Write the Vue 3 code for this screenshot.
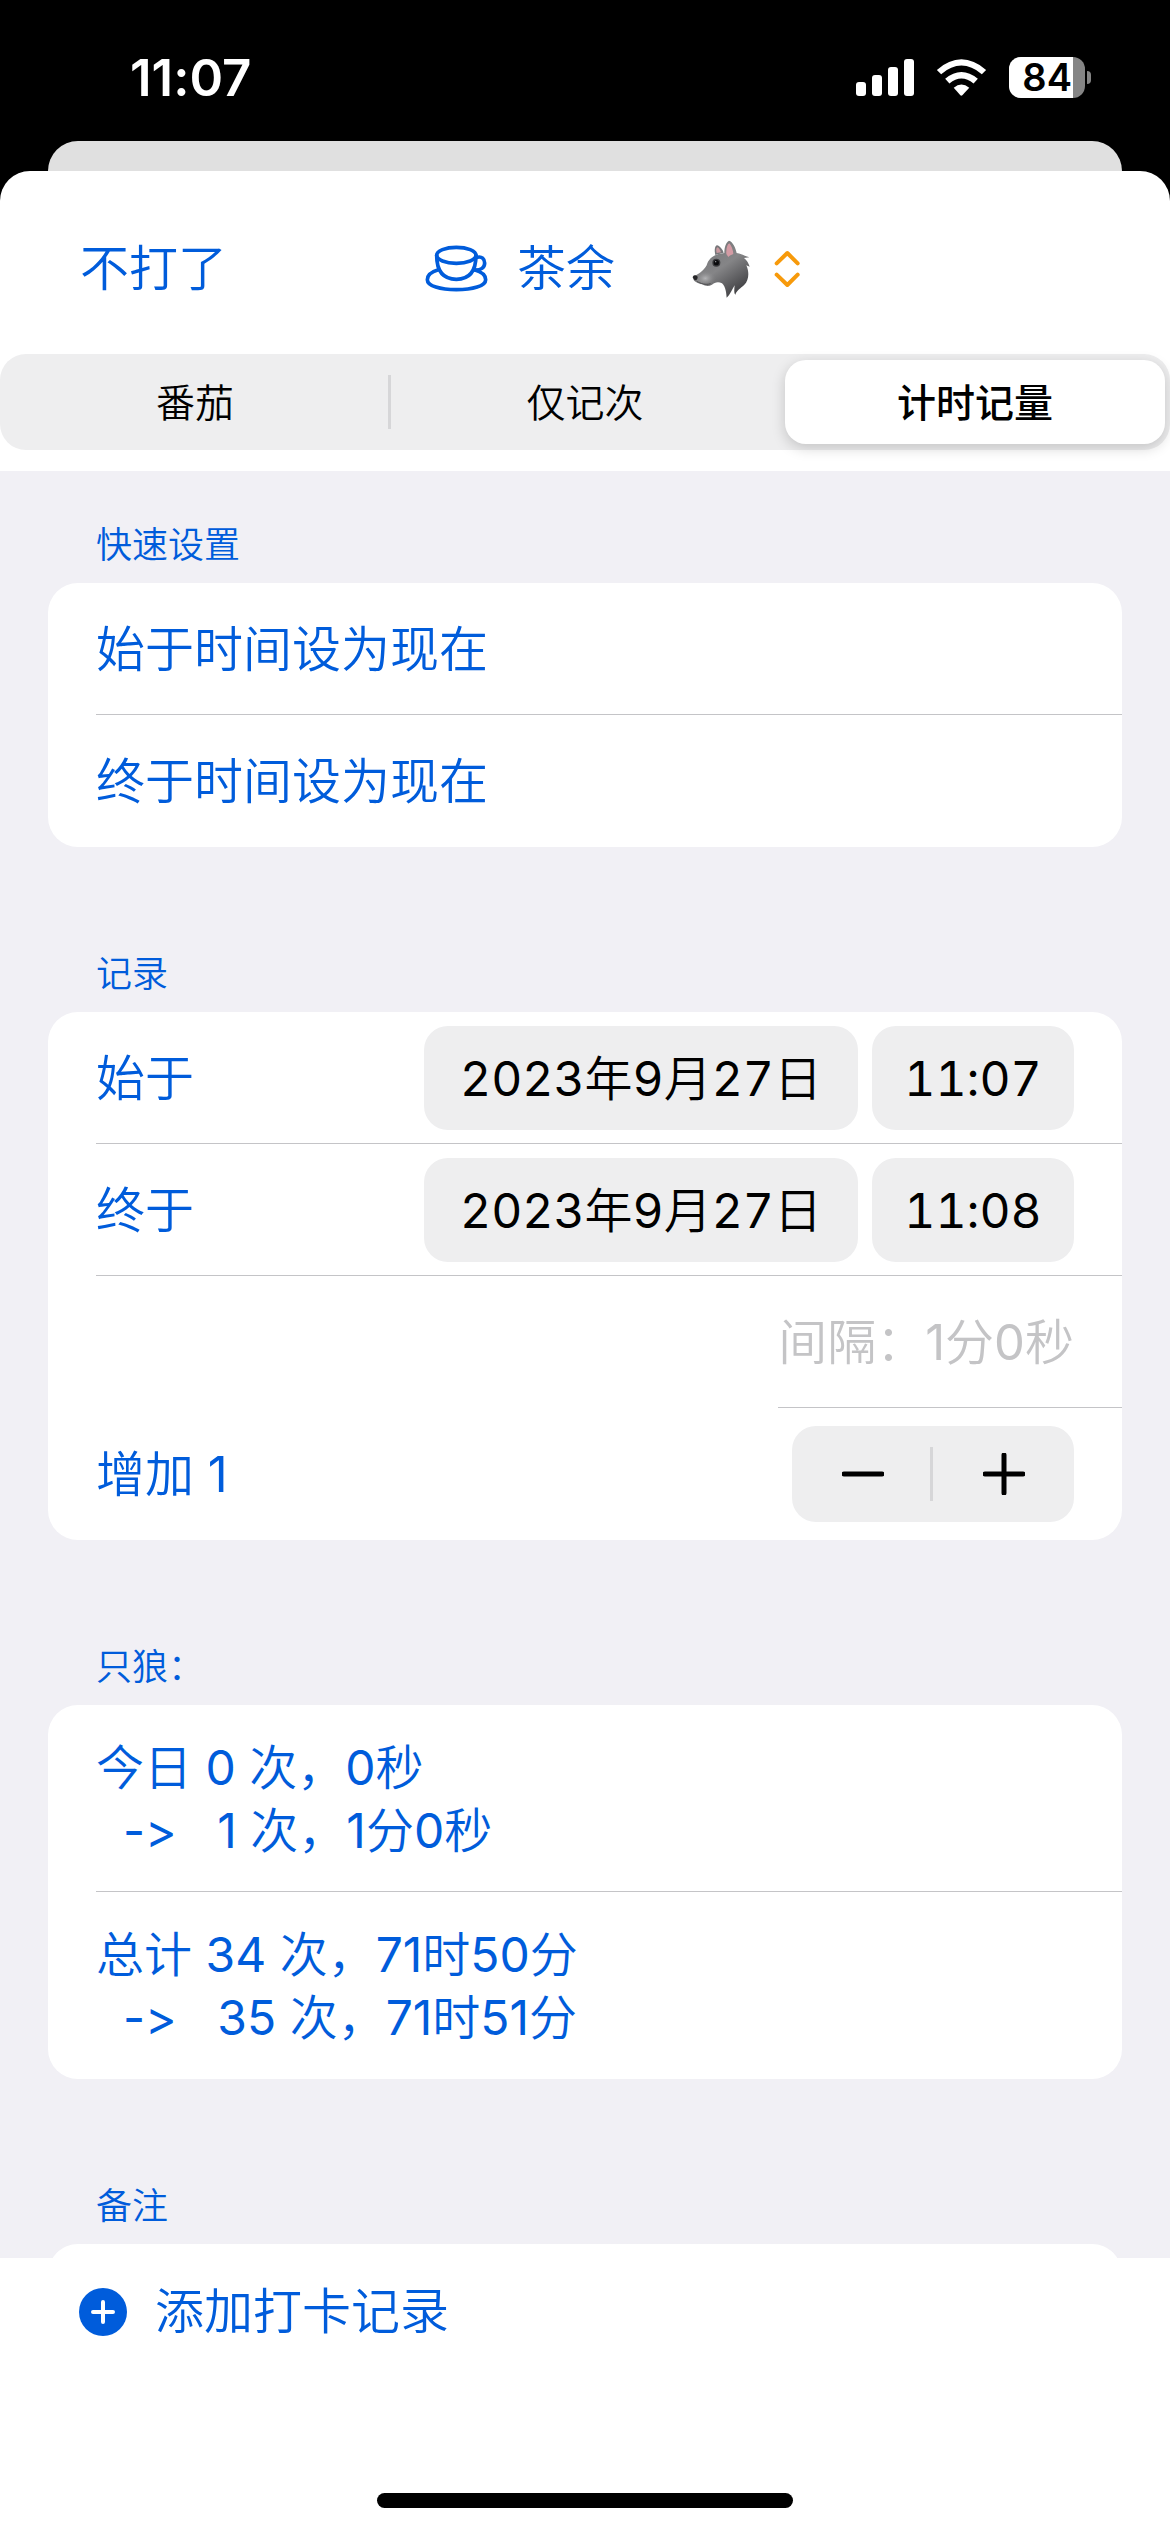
<script setup>
import { ref, computed } from 'vue'

const modes = ['番茄', '仅记次', '计时记量']
const mode = ref('计时记量')
const times = [
  { label: '始于', date: '2023年9月27日', time: '11:07' },
  { label: '终于', date: '2023年9月27日', time: '11:08' },
]
const amount = ref(1)
const note = ref('')
const stats = computed(() => [
  `今日 0 次，0秒\n  ->   ${amount.value} 次，1分0秒`,
  `总计 34 次，71时50分\n  ->   ${34 + amount.value} 次，71时51分`,
])
</script>

<template>
  <div class="screen">
    <div class="status">
      <span class="clock">11:07</span>
      <div class="indicators">
        <svg class="signal" viewBox="0 0 58 37" aria-hidden="true">
          <rect x="0" y="23" width="10" height="14" rx="3" />
          <rect x="16" y="16" width="10" height="21" rx="3" />
          <rect x="32" y="8" width="10" height="29" rx="3" />
          <rect x="48" y="0" width="10" height="37" rx="3" />
        </svg>
        <svg class="wifi" viewBox="318 56 153 112" aria-hidden="true">
          <path d="M320 89 Q394 25 469 89 L456 102 Q394 50 333 102 Z" />
          <path d="M345 116 Q394 75 444 116 L431 130 Q394 100 358 130 Z" />
          <path d="M371 143 Q394 124 418 143 L397 166 Q394 169 391 166 Z" />
        </svg>
        <div class="battery"><span class="level">84</span></div>
        <span class="nub"></span>
      </div>
    </div>
    <div class="back-sheet"></div>

    <main class="sheet">
      <header class="bar">
        <button class="plain" type="button">不打了</button>
        <button class="plain tag" type="button">
          <svg class="cup" viewBox="72 72 195 147" aria-hidden="true">
            <ellipse cx="169" cy="106" rx="59" ry="24" />
            <path d="M110 106 C110 153 128 178 169 178 C210 178 228 153 228 106" />
            <path d="M232 112 C245 108 254 117 254 129 C254 143 243 151 224 150" />
            <path d="M113 150 C93 156 82 167 82 179 C82 198 121 209 169 209 C218 209 257 198 257 179 C257 167 246 156 225 150" />
          </svg>
          <span>茶余</span>
        </button>
        <button class="plain animal" type="button" aria-label="狼">
          <svg class="wolf" viewBox="32 24 180 180" aria-hidden="true">
            <defs>
              <linearGradient id="fur" x1="0" y1="0" x2="0.7" y2="1">
                <stop offset="0" stop-color="#717173" />
                <stop offset="0.55" stop-color="#858587" />
                <stop offset="1" stop-color="#3f3f42" />
              </linearGradient>
              <radialGradient id="muzzle">
                <stop offset="0" stop-color="#b4b4b6" />
                <stop offset="1" stop-color="#858587" stop-opacity="0" />
              </radialGradient>
            </defs>
            <path fill="#77777a" d="M105 72 C101 56 104 44 110 43 C119 45 126 55 130 65 Z" />
            <path fill="#c99aa0" d="M109 66 C106 56 108 50 112 49 C117 53 120 58 122 64 Z" />
            <path fill="url(#fur)" d="M38 142 C36 135 40 131 48 132 C58 128 71 117 79 103 C84 83 101 69 132 66 C132 48 137 33 146 29 C157 32 166 50 169 66 C183 68 193 75 207 79 L191 81 C199 87 205 97 208 107 L198 103 C208 125 205 148 192 161 C182 171 169 177 165 191 C160 185 162 172 163 163 C155 175 150 191 139 200 C138 188 137 169 125 157 C113 151 102 155 95 161 C84 167 74 165 67 160 C54 159 39 151 38 142 Z" />
            <ellipse cx="75" cy="142" rx="31" ry="23" fill="url(#muzzle)" />
            <path fill="#d39ba4" d="M138 69 C137 51 141 40 147 37 C153 44 158 56 159 69 C152 72 148 74 144 78 Z" />
            <path fill="#252527" d="M37 139 C39 133 48 132 52 137 C53 143 48 149 43 148 Z" />
            <path fill="none" stroke="#4c4c4f" stroke-width="3" d="M49 151 C62 158 75 163 91 158" />
            <ellipse cx="108" cy="95" rx="12" ry="12" fill="#3b3b3e" />
            <circle cx="108" cy="95" r="8" fill="#0b0b0d" />
            <circle cx="106" cy="92" r="2" fill="#aaaaac" />
          </svg>
          <svg class="updown" viewBox="1116 84 84 120" aria-hidden="true">
            <path d="M1127 127 L1159 96 L1190 127 M1127 161 L1159 192 L1190 161" />
          </svg>
        </button>
      </header>

      <div class="segments" role="radiogroup" aria-label="模式">
        <label v-for="m in modes" :key="m" class="segment" :class="{ on: m === mode }">
          <input v-model="mode" type="radio" name="mode" :value="m" />
          <span>{{ m }}</span>
        </label>
      </div>

      <div class="list">
        <section>
          <h2>快速设置</h2>
          <div class="card">
            <button class="row" type="button">始于时间设为现在</button>
            <button class="row" type="button">终于时间设为现在</button>
          </div>
        </section>

        <section>
          <h2>记录</h2>
          <div class="card">
            <div v-for="t in times" :key="t.label" class="row">
              <span class="grow">{{ t.label }}</span>
              <button class="pill date" type="button">{{ t.date }}</button>
              <button class="pill time" type="button">{{ t.time }}</button>
            </div>
            <div class="row gap-row">间隔：1分0秒</div>
            <div class="row">
              <span class="grow">增加 {{ amount }}</span>
              <div class="stepper">
                <button type="button" aria-label="减少" @click="amount--">
                  <svg viewBox="0 0 42 42"><path d="M2 21 H40" /></svg>
                </button>
                <button type="button" aria-label="增加" @click="amount++">
                  <svg viewBox="0 0 42 42"><path d="M2 21 H40 M21 2 V40" /></svg>
                </button>
              </div>
            </div>
          </div>
        </section>

        <section>
          <h2>只狼：</h2>
          <div class="card">
            <p v-for="s in stats" :key="s" class="row stat">{{ s }}</p>
          </div>
        </section>

        <section>
          <h2><label for="note">备注</label></h2>
          <div class="card">
            <textarea id="note" v-model="note" class="note" rows="1"></textarea>
          </div>
        </section>
      </div>

      <footer class="footer">
        <button class="plain add" type="button">
          <svg class="plus" viewBox="0 0 48 48" aria-hidden="true">
            <circle cx="24" cy="24" r="24" />
            <path d="M14 24 H34 M24 14 V34" />
          </svg>
          <span>添加打卡记录</span>
        </button>
        <div class="home"></div>
      </footer>
    </main>
  </div>
</template>

<style>
body {
  background: #000;
}
</style>

<style scoped>
.screen {
  --blue: #005cdb;
  --gray: #eeeeef;
  display: flex;
  flex-direction: column;
  height: 100vh;
  box-sizing: border-box;
  background: #000;
  color: var(--blue);
  font: 400 49px/63px Inter, "Noto Sans CJK SC DemiLight", "Noto Sans CJK SC", sans-serif;
  font-variant-ligatures: none;
  font-feature-settings: "calt" 0;
}
button {
  margin: 0;
  padding: 0;
  border: 0;
  background: none;
  color: inherit;
  font: inherit;
  font-feature-settings: inherit;
  text-align: left;
}
svg {
  display: block;
  flex: none;
}
.status {
  display: flex;
  align-items: center;
  justify-content: space-between;
  height: 127px;
  padding: 14px 79px 0 130px;
  color: #fff;
}
.clock {
  font-size: 51px;
  font-weight: 600;
}
.indicators {
  display: flex;
  align-items: center;
}
.signal {
  width: 58px;
  height: 37px;
  fill: #fff;
}
.wifi {
  width: 51px;
  height: 37px;
  margin-left: 22px;
  fill: #fff;
}
.battery {
  width: 76px;
  margin-left: 22px;
  border-radius: 12px;
  background: #858585;
}
.level {
  display: block;
  width: 64px;
  padding-right: 1px;
  box-sizing: border-box;
  border-radius: 12px 0 0 12px;
  background: #fff;
  color: #000;
  font-size: 38px;
  font-weight: 600;
  line-height: 41px;
  text-align: right;
}
.nub {
  width: 4px;
  height: 13px;
  margin-left: 2px;
  border-radius: 0 5px 5px 0;
  background: #858585;
}
.back-sheet {
  height: 60px;
  margin: 0 48px -30px;
  border-radius: 30px 30px 0 0;
  background: #e0e0e0;
}
.sheet {
  display: flex;
  flex: 1;
  flex-direction: column;
  min-height: 0;
  overflow: hidden;
  border-radius: 30px 30px 0 0;
  background: #fff;
}
.bar {
  display: flex;
  flex: none;
  align-items: center;
  height: 183px;
  padding: 12px 80px 0;
  box-sizing: border-box;
}
.tag {
  display: flex;
  gap: 28px;
  align-items: center;
  margin-left: 197px;
}
.cup {
  width: 65px;
  height: 49px;
  fill: none;
  stroke: var(--blue);
  stroke-width: 11;
  stroke-linecap: round;
}
.animal {
  display: flex;
  gap: 22px;
  align-items: center;
  margin-left: 76px;
}
.wolf {
  width: 60px;
  height: 60px;
}
.updown {
  width: 28px;
  height: 40px;
  fill: none;
  stroke: #f79a0b;
  stroke-width: 12;
  stroke-linecap: round;
  stroke-linejoin: round;
}
.segments {
  display: flex;
  flex: none;
  height: 96px;
  margin-bottom: 21px;
  border-radius: 26px;
  background: var(--gray);
  color: #000;
  font-size: 39px;
}
.segment {
  position: relative;
  display: flex;
  flex: 1;
  align-items: center;
  justify-content: center;
  margin: 6px 5px;
  border-radius: 21px;
}
.segment input {
  position: absolute;
  inset: 0;
  margin: 0;
  opacity: 0;
}
.segment:first-child::after {
  content: "";
  position: absolute;
  top: 15px;
  right: -6px;
  width: 3px;
  height: 54px;
  background: #d6d6d8;
}
.segment.on {
  background: #fff;
  box-shadow: 0 4px 14px rgba(0, 0, 0, 0.18);
  font-family: Inter, "Noto Sans CJK SC", sans-serif;
  font-weight: 500;
}
.list {
  flex: 1;
  min-height: 0;
  padding: 52px 48px 0;
  overflow: auto;
  scrollbar-width: none;
  background: #f1f0f5;
}
section {
  margin-bottom: 105px;
}
h2 {
  margin: 0 0 16px;
  padding-left: 48px;
  font-size: 36px;
  font-weight: inherit;
  line-height: 44px;
}
.card {
  overflow: hidden;
  border-radius: 30px;
  background: #fff;
}
.row {
  position: relative;
  display: flex;
  align-items: center;
  width: 100%;
  min-height: 132px;
  margin: 0;
  padding: 0 48px;
  box-sizing: border-box;
}
.row:not(:last-child)::after {
  content: "";
  position: absolute;
  right: 0;
  bottom: 0;
  left: 48px;
  height: 1px;
  background: #c4c4c7;
}
.grow {
  flex: 1;
}
.pill {
  height: 104px;
  border-radius: 24px;
  background: var(--gray);
  color: #000;
  font-size: 48px;
  font-variant-numeric: tabular-nums;
  text-align: center;
}
.date {
  width: 434px;
}
.time {
  width: 202px;
  margin-left: 14px;
}
.gap-row {
  width: fit-content;
  margin-left: auto;
  padding-left: 0;
  color: #c4c4c6;
}
.gap-row:not(:last-child)::after {
  left: 0;
}
.stepper {
  display: flex;
  width: 282px;
  height: 96px;
  border-radius: 24px;
  background: var(--gray);
}
.stepper button {
  position: relative;
  display: flex;
  flex: 1;
  align-items: center;
  justify-content: center;
}
.stepper button:first-child::after {
  content: "";
  position: absolute;
  top: 21px;
  right: 0;
  width: 3px;
  height: 54px;
  background: #d6d6d8;
}
.stepper svg {
  width: 42px;
  height: 42px;
  fill: none;
  stroke: #000;
  stroke-width: 5;
  stroke-linecap: round;
}
.stat {
  min-height: 187px;
  font-size: 48px;
  white-space: pre;
}
.note {
  display: block;
  width: 100%;
  height: 132px;
  padding: 34px 48px;
  box-sizing: border-box;
  border: 0;
  outline: 0;
  resize: none;
  background: none;
  color: inherit;
  font: inherit;
}
.footer {
  display: flex;
  flex: none;
  flex-direction: column;
  align-items: center;
  justify-content: space-between;
  height: 274px;
  padding: 22px 79px 24px;
  box-sizing: border-box;
}
.add {
  display: flex;
  gap: 28px;
  align-items: center;
  align-self: flex-start;
}
.plus {
  width: 48px;
  height: 48px;
  fill: var(--blue);
  stroke: #fff;
  stroke-width: 4;
  stroke-linecap: round;
}
.plus circle {
  stroke: none;
}
.home {
  width: 416px;
  height: 15px;
  border-radius: 8px;
  background: #000;
}
</style>
